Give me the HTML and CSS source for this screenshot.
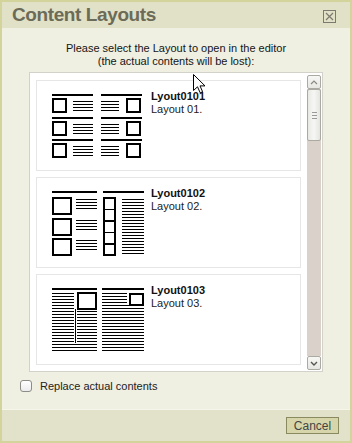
FILE: index.html
```html
<!DOCTYPE html>
<html lang="en">
<head>
    <meta charset="UTF-8">
    <title>Content Layouts</title>
    <link rel="stylesheet" href="styles.css">
</head>
<body>
    <div class="dialog">
        <div class="titlebar">
            <span class="title">Content Layouts</span>
            <svg class="close" width="13" height="13" viewBox="0 0 13 13">
                <rect x="0.5" y="0.5" width="12" height="12" fill="none" stroke="#7a7a6e"/>
                <path d="M3 3L10 10M10 3L3 10" stroke="#7a7a6e" stroke-width="1.2"/>
            </svg>
        </div>

        <div class="content">
            <p class="prompt">Please select the Layout to open in the editor<br>(the actual contents will be lost):</p>

            <div class="listbox">
                <div class="items">
                    <div class="item">
                        <svg class="thumb" width="92" height="66" viewBox="0 0 92 66" shape-rendering="crispEdges">
                            <path stroke="#000" stroke-width="2" d="M0 2h41M49 2h41M0 25h41M49 25h41M0 47h41M49 47h41"/>
                            <path stroke="#000" d="M21 8.5h20M21 11.5h20M21 14.5h20M21 17.5h20M49 8.5h18M49 11.5h18M49 14.5h18M49 17.5h18M21 31.5h20M21 34.5h20M21 37.5h20M21 40.5h20M49 31.5h18M49 34.5h18M49 37.5h18M49 40.5h18M21 53.5h20M21 56.5h20M21 59.5h20M21 62.5h20M49 53.5h18M49 56.5h18M49 59.5h18M49 62.5h18"/>
                            <g fill="none" stroke="#000" stroke-width="1.5">
                                <rect x="1" y="6" width="13" height="13"/>
                                <rect x="75" y="6" width="13" height="13"/>
                                <rect x="1" y="29" width="13" height="13"/>
                                <rect x="75" y="29" width="13" height="13"/>
                                <rect x="1" y="51" width="13" height="13"/>
                                <rect x="75" y="51" width="13" height="13"/>
                            </g>
                        </svg>
                        <div class="info">
                            <b>Lyout0101</b>
                            <span>Layout 01.</span>
                        </div>
                    </div>

                    <div class="item">
                        <svg class="thumb" width="92" height="66" viewBox="0 0 92 66" shape-rendering="crispEdges">
                            <path stroke="#000" stroke-width="2" d="M0 2h45M51 2h41"/>
                            <path stroke="#000" d="M24 9.5h21M24 12.5h21M24 15.5h21M24 18.5h21M24 30.5h21M24 33.5h21M24 36.5h21M24 39.5h21M24 50.5h21M24 53.5h21M24 56.5h21M24 59.5h21M70 9.5h22M70 12.5h22M70 15.5h22M70 18.5h22M70 21.5h22M70 24.5h22M70 27.5h22M70 30.5h22M70 33.5h22M70 36.5h22M70 39.5h22M70 42.5h22M70 45.5h22M70 48.5h22M70 51.5h22M70 54.5h22M70 57.5h22M70 60.5h22M70 63.5h22"/>
                            <g fill="none" stroke="#000" stroke-width="1.5">
                                <rect x="1" y="8" width="18" height="16"/>
                                <rect x="1" y="29" width="18" height="16"/>
                                <rect x="1" y="49" width="18" height="16"/>
                                <rect x="52" y="8" width="11" height="57"/>
                                <path d="M52 19.5h11M52 31h11M52 42.5h11M52 54h11"/>
                            </g>
                        </svg>
                        <div class="info">
                            <b>Lyout0102</b>
                            <span>Layout 02.</span>
                        </div>
                    </div>

                    <div class="item">
                        <svg class="thumb" width="92" height="66" viewBox="0 0 92 66" shape-rendering="crispEdges">
                            <path stroke="#000" stroke-width="2" d="M0 2h45M50 2h42"/>
                            <path stroke="#000" d="M0 6.5h22M0 9.5h22M0 12.5h22M0 15.5h22M0 18.5h22M0 21.5h22M0 24.5h22M0 27.5h22M0 30.5h22M0 33.5h22M0 36.5h22M0 39.5h22M0 42.5h22M0 45.5h22M0 48.5h22M0 51.5h22M0 54.5h22M25 24.5h20M25 27.5h20M25 30.5h20M25 33.5h20M25 36.5h20M25 39.5h20M25 42.5h20M25 45.5h20M25 48.5h20M25 51.5h20M25 54.5h20M0 57.5h45M0 60.5h45M0 63.5h45M50 6.5h25M50 9.5h25M50 12.5h25M50 15.5h25M50 18.5h27M50 21.5h42M50 24.5h42M50 27.5h42M50 30.5h42M50 33.5h42M50 36.5h42M50 39.5h42M50 42.5h42M50 45.5h42M50 48.5h42M50 51.5h42M50 54.5h42M50 57.5h42M50 60.5h42M50 63.5h42"/>
                            <g fill="none" stroke="#000" stroke-width="1.5">
                                <rect x="26" y="6" width="18" height="16"/>
                                <rect x="78" y="7" width="13" height="11"/>
                                <path d="M23.5 22v34"/>
                            </g>
                        </svg>
                        <div class="info">
                            <b>Lyout0103</b>
                            <span>Layout 03.</span>
                        </div>
                    </div>
                </div>

                <div class="scrollbar">
                    <div class="sb-btn">
                        <svg width="8" height="5" viewBox="0 0 8 5"><path d="M1 4L4 1L7 4" fill="none" stroke="#8a8a84" stroke-width="1.2"/></svg>
                    </div>
                    <div class="sb-track">
                        <div class="sb-thumb"><span class="grip"></span></div>
                    </div>
                    <div class="sb-btn">
                        <svg width="8" height="5" viewBox="0 0 8 5"><path d="M1 1L4 4L7 1" fill="none" stroke="#55554f" stroke-width="1.4"/></svg>
                    </div>
                </div>
            </div>

            <label class="replace">
                <span class="checkbox"></span>
                Replace actual contents
            </label>
        </div>

        <div class="footer">
            <button class="cancel">Cancel</button>
        </div>
    </div>

    <!-- pointer caught in the screenshot -->
    <svg class="cursor" width="13" height="20" viewBox="0 0 13 20">
        <path d="M0.5 0.5V16.5L4.5 12.8L7.2 18.8L9.6 17.7L7 11.9H12Z" fill="#fff" stroke="#000" stroke-linejoin="round"/>
    </svg>
</body>
</html>
```

FILE: styles.css
```css
body {
    margin: 0;
    font-family: "Liberation Sans", Arial, sans-serif;
    font-size: 11px;
    color: #1a1a1a;
}
.dialog {
    width: 352px;
    height: 443px;
    box-sizing: border-box;
    border: 2px solid #d3d39c;
    display: flex;
    flex-direction: column;
    background: #efefe2;
}
.titlebar {
    height: 26px;
    flex-shrink: 0;
    background: #e1e1c8;
    display: flex;
    align-items: center;
    justify-content: space-between;
    padding: 0 14px 0 10px;
}
.title {
    font-size: 19px;
    font-weight: bold;
    letter-spacing: -0.4px;
    color: #6b6b57;
}
.close {
    margin-top: 3px;
}
.content {
    flex: 1;
    padding: 14px 0 0 0;
}
.prompt {
    margin: 0;
    text-align: center;
    line-height: 13px;
    color: #151515;
}
.listbox {
    margin: 4px 0 0 27px;
    width: 294px;
    height: 300px;
    box-sizing: border-box;
    border: 1px solid #d2d2ca;
    background: #fff;
    display: flex;
    padding: 2px 1px 1px 6px;
}
.items {
    flex: 1;
    margin-right: 6px;
    padding-top: 5px;
    overflow: hidden;
    display: flex;
    flex-direction: column;
    gap: 6px;
}
.item {
    flex-shrink: 0;
    height: 91px;
    box-sizing: border-box;
    border: 1px solid #e6e6e6;
    padding: 12px 0 0 15px;
    display: flex;
}
.thumb {
    flex-shrink: 0;
    margin-right: 7px;
}
.info {
    margin-top: -3px;
    display: flex;
    flex-direction: column;
    line-height: 13px;
    font-size: 11px;
}
.info b {
    color: #111;
}
.info span {
    color: #222;
}
.scrollbar {
    width: 14px;
    display: flex;
    flex-direction: column;
}
.sb-btn {
    height: 14px;
    flex-shrink: 0;
    box-sizing: border-box;
    border: 1px solid #aaa9a2;
    border-radius: 2px;
    background: linear-gradient(#f7f7f5, #e6e6e2);
    display: flex;
    align-items: center;
    justify-content: center;
}
.sb-track {
    flex: 1;
    background: #d9d1ca;
}
.sb-thumb {
    height: 52px;
    box-sizing: border-box;
    border: 1px solid #aaa9a2;
    border-radius: 2px;
    background: linear-gradient(90deg, #e8e8e4, #f6f6f4 50%, #e4e4e0);
    display: flex;
    align-items: center;
    justify-content: center;
}
.grip {
    width: 5px;
    height: 5px;
    border-top: 1px solid #999;
    border-bottom: 1px solid #999;
    position: relative;
}
.grip::after {
    content: "";
    position: absolute;
    left: 0;
    right: 0;
    top: 2px;
    border-top: 1px solid #999;
}
.replace {
    margin: 8px 0 0 18px;
    display: flex;
    align-items: center;
    gap: 8px;
    color: #222;
}
.checkbox {
    width: 12px;
    height: 12px;
    box-sizing: border-box;
    border: 1px solid #8c8c88;
    border-radius: 3px;
    background: linear-gradient(#fff, #ececec);
}
.footer {
    height: 32px;
    flex-shrink: 0;
    background: #e2e2ca;
    border-top: 1px solid #f5f5ea;
    display: flex;
    justify-content: flex-end;
    padding: 7px 11px 0 0;
    box-sizing: border-box;
}
.cancel {
    height: 17px;
    width: 53px;
    padding: 0;
    font-family: "Liberation Sans", Arial, sans-serif;
    font-size: 12px;
    color: #444;
    background: #d6d6aa;
    border: 1px solid #8a8a60;
}
.cursor {
    position: absolute;
    left: 193px;
    top: 74px;
}
```
